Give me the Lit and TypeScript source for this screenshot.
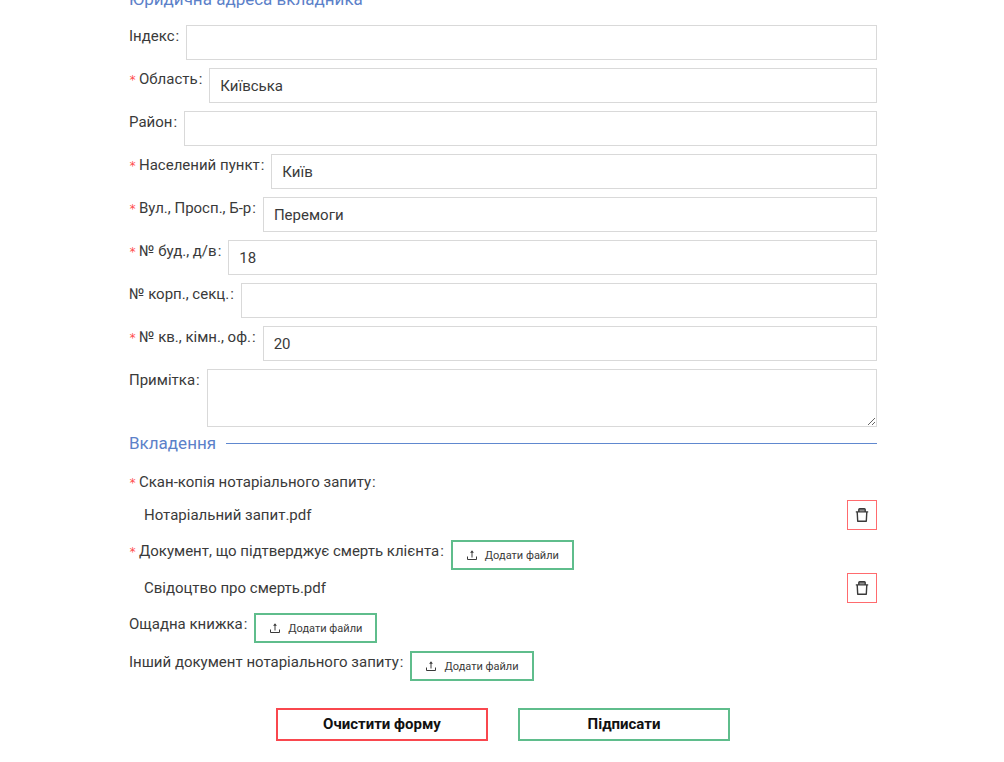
import { LitElement, html, css, svg, nothing } from "lit";
import { customElement } from "lit/decorators.js";

interface Field {
  id: string;
  label: string;
  value?: string;
  required?: boolean;
  multiline?: boolean;
}

interface Attachment {
  id: string;
  label: string;
  required?: boolean;
  file?: string;
  canAdd?: boolean;
}

const fields: Field[] = [
  { id: "zip", label: "Індекс" },
  { id: "region", label: "Область", value: "Київська", required: true },
  { id: "district", label: "Район" },
  { id: "city", label: "Населений пункт", value: "Київ", required: true },
  { id: "street", label: "Вул., Просп., Б-р", value: "Перемоги", required: true },
  { id: "house", label: "№ буд., д/в", value: "18", required: true },
  { id: "block", label: "№ корп., секц." },
  { id: "flat", label: "№ кв., кімн., оф.", value: "20", required: true },
  { id: "note", label: "Примітка", multiline: true },
];

const attachments: Attachment[] = [
  { id: "request", label: "Скан-копія нотаріального запиту", required: true, file: "Нотаріальний запит.pdf" },
  { id: "death", label: "Документ, що підтверджує смерть клієнта", required: true, file: "Свідоцтво про смерть.pdf", canAdd: true },
  { id: "book", label: "Ощадна книжка", canAdd: true },
  { id: "other", label: "Інший документ нотаріального запиту", canAdd: true },
];

const uploadIcon = html`<svg class="upload" viewBox="0 0 12 12" aria-hidden="true">
  ${svg`<path d="M1.5 7.5V10.5H10.5V7.5M6 8.5V2.5" fill="none" stroke="currentColor" stroke-width="1"/><path d="M6 1.2L7.9 3.8H4.1Z" fill="currentColor"/>`}
</svg>`;

const trashIcon = html`<svg class="trash" viewBox="0 0 14 14" aria-hidden="true">
  ${svg`<path d="M4 1H10V3.4H4Z" fill="#8c8c8c"/><path d="M.8 3.9H13.2M3.8 3.7V1.5Q3.8 .7 4.6 .7H9.4Q10.2 .7 10.2 1.5V3.7M2.2 3.9L2.7 13.2H11.3L11.8 3.9" fill="none" stroke="currentColor" stroke-width="1.4" stroke-linejoin="round"/>`}
</svg>`;

@customElement("app-root")
export class AppRoot extends LitElement {
  static styles = css`
    :host {
      display: block;
      font-family: Roboto, "Noto Sans", sans-serif;
      font-size: 15px;
      line-height: 22px;
      color: #3a3a3a;
      background: #fff;
    }
    * {
      box-sizing: border-box;
    }
    .form {
      margin-top: -14px;
      padding: 0 127px 20px 129px;
    }
    .heading {
      display: flex;
      align-items: center;
      gap: 10px;
      margin: 0;
      font-size: 17px;
      font-weight: 400;
      line-height: 26px;
      color: #5c81c9;
    }
    .heading::after {
      content: "";
      flex: 1;
      height: 1px;
      background: #6088cf;
    }
    .fields {
      display: grid;
      gap: 8px;
      padding: 13px 0 3px;
    }
    .row {
      display: flex;
      align-items: flex-start;
      gap: 7px;
    }
    .label {
      display: flex;
      white-space: nowrap;
    }
    .star {
      width: 6px;
      margin-right: 4px;
      padding-top: 2px;
      font-family: "DejaVu Sans Mono", monospace;
      font-size: 12px;
      line-height: 20px;
      color: #ff4d4f;
    }
    .colon {
      margin-left: 1px;
    }
    .input {
      flex: 1;
      min-width: 0;
      height: 35px;
      padding: 0 10px;
      border: 1px solid #d9d9d9;
      border-radius: 0;
      outline: none;
      background: #fff;
      font: inherit;
      color: inherit;
    }
    .area {
      height: 58px;
      padding: 4px 10px;
      resize: vertical;
    }
    .attachments {
      padding-top: 15px;
    }
    .group {
      margin-bottom: 8px;
    }
    .group.filled {
      margin-bottom: 10px;
    }
    .file {
      display: flex;
      align-items: center;
      justify-content: space-between;
      padding-left: 15px;
    }
    .row + .file {
      margin-top: 3px;
    }
    .row.plain + .file {
      margin-top: 7px;
    }
    button {
      display: flex;
      align-items: center;
      justify-content: center;
      border-radius: 0;
      background: #fff;
      font-family: inherit;
      color: inherit;
      cursor: pointer;
    }
    .remove {
      width: 30px;
      height: 30px;
      padding: 0;
      border: 1px solid #ff6b6e;
    }
    .add {
      gap: 7px;
      height: 30px;
      padding: 0 13px;
      border: 2px solid #5fbd8c;
      font-size: 11px;
    }
    .upload {
      width: 12px;
      height: 12px;
    }
    .trash {
      width: 14px;
      height: 14px;
    }
    .actions {
      display: flex;
      justify-content: center;
      gap: 30px;
      padding-top: 19px;
    }
    .action {
      width: 212px;
      height: 33px;
      padding: 0 0 1px;
      border: 2px solid #5fbd8c;
      font-size: 15px;
      font-weight: 700;
      color: #111;
    }
    .action.clear {
      border-color: #f9474e;
    }
  `;

  private labelText(label: string, required?: boolean) {
    return html`${required ? html`<span class="star">*</span>` : nothing}<span>${label}</span><span class="colon">:</span>`;
  }

  private field(f: Field) {
    return html`<div class="row">
      <label class="label" for=${f.id}>${this.labelText(f.label, f.required)}</label>
      ${f.multiline
        ? html`<textarea class="input area" id=${f.id}></textarea>`
        : html`<input class="input" type="text" id=${f.id} .value=${f.value ?? ""} ?required=${f.required} />`}
    </div>`;
  }

  private attachment(a: Attachment) {
    return html`<div class="group ${a.file ? "filled" : ""}">
      <div class="row ${a.canAdd ? "" : "plain"}">
        <span class="label" id=${a.id}>${this.labelText(a.label, a.required)}</span>
        ${a.canAdd
          ? html`<button class="add" type="button" aria-describedby=${a.id}>${uploadIcon}<span>Додати файли</span></button>`
          : nothing}
      </div>
      ${a.file
        ? html`<div class="file">
            <span>${a.file}</span>
            <button class="remove" type="button" aria-describedby=${a.id}>${trashIcon}</button>
          </div>`
        : nothing}
    </div>`;
  }

  render() {
    return html`<form class="form">
      <h2 class="heading">Юридична адреса вкладника</h2>
      <div class="fields">${fields.map((f) => this.field(f))}</div>
      <h2 class="heading">Вкладення</h2>
      <div class="attachments">${attachments.map((a) => this.attachment(a))}</div>
      <div class="actions">
        <button class="action clear" type="reset">Очистити форму</button>
        <button class="action" type="button">Підписати</button>
      </div>
    </form>`;
  }
}
